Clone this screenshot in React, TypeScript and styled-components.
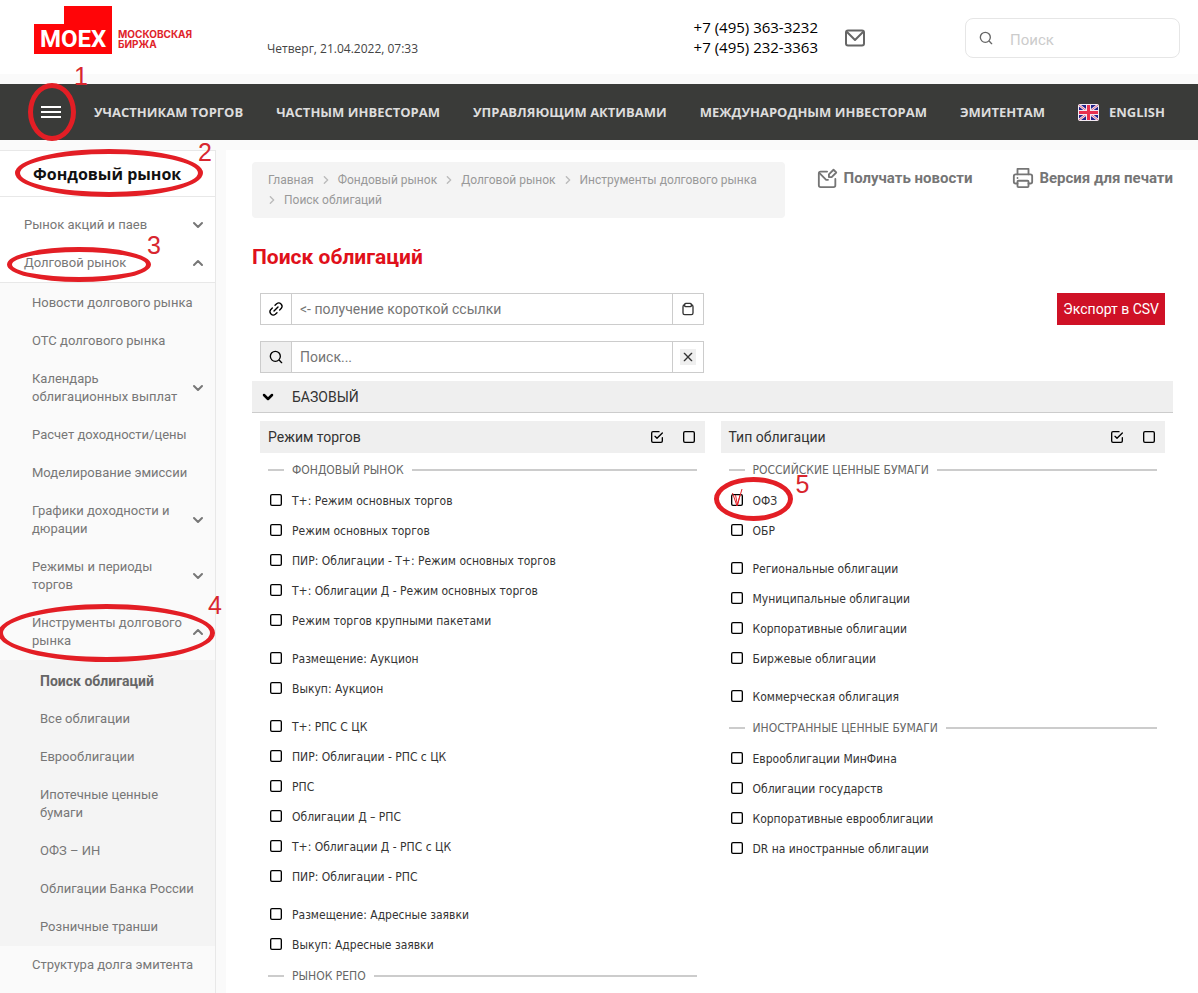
import React from 'react';
import styled, { createGlobalStyle, css } from 'styled-components';

const ui = '"Roboto", "Open Sans", sans-serif';
const wide = '"Open Sans", "Noto Sans", sans-serif';
const form = '"DejaVu Sans Condensed", "Noto Sans", sans-serif';
const markRed = '#e31e25';

const GlobalStyle = createGlobalStyle`
  *, *::before, *::after { box-sizing: border-box; }
  body { margin: 0; background: #fafafa; color: #333; font: 13px/18px ${ui}; }
  button, input { font: inherit; color: inherit; }
  button { border: 0; padding: 0; background: none; cursor: pointer; }
  a { color: inherit; text-decoration: none; }
  ul { list-style: none; margin: 0; padding: 0; }
  svg { display: block; flex: none; }
`;

/* ---------- icons ---------- */

const Line = styled.svg.attrs({ viewBox: '0 0 24 24', 'aria-hidden': true })<{ $size?: number; $weight?: number }>`
  width: ${p => p.$size ?? 16}px;
  height: ${p => p.$size ?? 16}px;
  fill: none;
  stroke: currentColor;
  stroke-width: ${p => p.$weight ?? 2};
  stroke-linecap: round;
  stroke-linejoin: round;
`;

const SearchIcon = ({ weight = 2 }: { weight?: number }) => (
  <Line $weight={weight}><circle cx="11" cy="11" r="7.500" /><path d="M20.500 20.500L17 17" /></Line>
);
const LinkIcon = () => (
  <Line>
    <path d="M9 15l6-6" />
    <path d="M10.500 6.500L13 4a5 5 0 0 1 7 7l-2.500 2.500" />
    <path d="M13.500 17.500L11 20a5 5 0 0 1-7-7l2.500-2.500" />
  </Line>
);
const ClipboardIcon = () => (
  <Line>
    <path d="M7 5.500a3 3 0 0 0-2.500 3V18a2.500 2.500 0 0 0 2.500 2.500h10a2.500 2.500 0 0 0 2.500-2.500V8.500a3 3 0 0 0-2.500-3" />
    <rect x="7" y="3.500" width="10" height="5" rx="1.500" />
  </Line>
);
const CloseIcon = () => <Line><path d="M6.500 6.500l11 11M17.500 6.500l-11 11" /></Line>;
const SquareIcon = () => <Line><rect x="4" y="4" width="16" height="16" rx="2" /></Line>;
const SquareCheckIcon = () => (
  <Line><path d="M9 11l3 3 8-8" /><path d="M20 13v5a2 2 0 0 1-2 2H6a2 2 0 0 1-2-2V6a2 2 0 0 1 2-2h9" /></Line>
);
const MailIcon = () => (
  <Line $size={24}><rect x="3" y="4.500" width="18" height="15" rx="2" /><path d="M4 6l8 8 8-8" /></Line>
);
const MailEditIcon = () => (
  <Line $size={22} $weight={2}>
    <path d="M11 5H4a2 2 0 0 0-2 2v13a2 2 0 0 0 2 2h14a2 2 0 0 0 2-2v-7" />
    <path d="M3 7l7 7h2" />
    <path d="M13 8l5-5 3 3-5 5h-3z" />
  </Line>
);
const PrinterIcon = () => (
  <Line $size={22}>
    <path d="M6 8V2h12v6" />
    <path d="M6 18H4a2 2 0 0 1-2-2v-6a2 2 0 0 1 2-2h16a2 2 0 0 1 2 2v6a2 2 0 0 1-2 2h-2" />
    <rect x="6" y="15" width="12" height="7" rx="1" />
    <path d="M6 12h0" />
  </Line>
);
const ChevronDown = ({ weight = 4 }: { weight?: number }) => <Line $size={12} $weight={weight}><path d="M4 8l8 8 8-8" /></Line>;
const ChevronUp = () => <Line $size={12} $weight={4}><path d="M4 16l8-8 8 8" /></Line>;

const FlagSvg = styled.svg`width: 21px; height: 17px;`;
const Flag = () => (
  <FlagSvg viewBox="0 0 21 17" aria-hidden="true">
    <rect width="21" height="17" rx="2" fill="#f2e9f2" />
    <rect x="1" y="1" width="19" height="15" fill="#22228a" />
    <path d="M1 1l19 15M20 1L1 16" stroke="#f2e9f2" strokeWidth="2.500" />
    <path d="M1 1l19 15M20 1L1 16" stroke="#e5476a" strokeWidth="0.800" />
    <path d="M10.500 1v15M1 8.500h19" stroke="#f2e9f2" strokeWidth="5" />
    <path d="M10.500 1v15M1 8.500h19" stroke="#e8304f" strokeWidth="3" />
  </FlagSvg>
);

/* ---------- hand-drawn step marks ---------- */

const MarkBox = styled.span<{ $x: number; $y: number }>`
  position: absolute;
  left: ${p => p.$x}px;
  top: ${p => p.$y}px;
  z-index: 2;
  pointer-events: none;
`;
const MarkRing = styled.span<{ $w: number; $h: number }>`
  display: block;
  width: ${p => p.$w}px;
  height: ${p => p.$h}px;
  border: 5px solid ${markRed};
  border-radius: 50%;
`;
const MarkNumber = styled.span<{ $x: number; $y: number }>`
  position: absolute;
  left: ${p => p.$x}px;
  top: ${p => p.$y}px;
  font: 25px/24px "Liberation Sans", Arial, sans-serif;
  color: #d8262e;
`;
type MarkProps = { x: number; y: number; w: number; h: number; n: string; nx: number; ny: number };
const Mark = ({ x, y, w, h, n, nx, ny }: MarkProps) => (
  <MarkBox $x={x} $y={y}>
    <MarkRing $w={w} $h={h} />
    <MarkNumber $x={nx} $y={ny}>{n}</MarkNumber>
  </MarkBox>
);

/* ---------- page frame ---------- */

const Page = styled.div`display: flex; flex-direction: column; min-height: 100vh;`;

const Header = styled.header`
  display: flex;
  align-items: flex-start;
  height: 74px;
  padding: 0 18px 0 34px;
  background: #fff;
`;
const Logo = styled.svg`width: 160px; height: 54px;`;
const DateText = styled.time`
  margin: 40px auto 0 73px;
  font: 12px/18px ${wide};
  color: #444;
`;
const Phones = styled.address`
  margin: 17px 25px 0 0;
  font: normal 15px/20px ${wide};
  color: #000;
`;
const Phone = styled.a`display: block; white-space: nowrap;`;
const MailLink = styled.a`margin: 26px 98px 0 0; color: #666;`;
const SiteSearch = styled.label`
  display: flex;
  align-items: center;
  gap: 16px;
  width: 215px;
  height: 40px;
  margin-top: 18px;
  padding: 0 12px;
  border: 1px solid #e6e6e6;
  border-radius: 8px;
  color: #666;
`;
const SiteSearchInput = styled.input`
  flex: 1;
  min-width: 0;
  border: 0;
  outline: 0;
  padding: 3px 0 0;
  background: none;
  font: 15px/20px ${ui};
  &::placeholder { color: #ccc; opacity: 1; }
`;

const Nav = styled.nav`
  position: relative;
  display: flex;
  align-items: center;
  justify-content: space-between;
  height: 56px;
  margin: 10px 0;
  padding: 0 33px 0 41px;
  background: #3a3b39;
  font: bold 13px/18px ${wide};
  color: #ddd;
  white-space: nowrap;
`;
const Burger = styled.button`
  display: flex;
  flex-direction: column;
  gap: 3px;
  width: 20px;
`;
const BurgerBar = styled.span`height: 2px; background: #fff;`;
const NavLink = styled.a`display: flex; align-items: center; gap: 10px;`;

const Body = styled.div`display: flex; flex: 1; gap: 10px;`;

/* ---------- side menu ---------- */

const Side = styled.aside`
  flex: none;
  width: 216px;
  border-top: 1px solid #e8e8e8;
  border-right: 1px solid #e8e8e8;
`;
const SideTitle = styled.h2`
  position: relative;
  margin: 0;
  padding: 12px 33px 11px;
  border-bottom: 1px solid #e8e8e8;
  background: #fff;
  font: bold 16px/22px ${wide};
  color: #111;
`;
const TopMenu = styled.ul`padding-top: 9px; background: #fff;`;
const SubMenu = styled.ul`padding-top: 1px; border-top: 1px solid #e8e8e8; background: #fafafa;`;
const LeafMenu = styled.ul`padding: 2px 0 0; background: #f4f4f4;`;
const MenuItem = styled.li`position: relative;`;
const MenuLink = styled.a<{ $level: number; $current?: boolean }>`
  display: flex;
  align-items: center;
  justify-content: space-between;
  gap: 4px;
  padding: 10px 11px 10px ${p => 16 + p.$level * 8}px;
  color: #777;
  ${p => p.$current && css`font-size: 14px; font-weight: bold; color: #666;`}
`;

type Entry = { text: string; open?: boolean; mark?: MarkProps; current?: boolean; children?: Entry[]; fold?: boolean };
const menu: Entry[] = [
  { text: 'Рынок акций и паев', fold: true },
  {
    text: 'Долговой рынок', open: true,
    mark: { x: 7, y: 3, w: 144, h: 35, n: '3', nx: 140, ny: -14 },
    children: [
      { text: 'Новости долгового рынка' },
      { text: 'ОТС долгового рынка' },
      { text: 'Календарь облигационных выплат', fold: true },
      { text: 'Расчет доходности/цены' },
      { text: 'Моделирование эмиссии' },
      { text: 'Графики доходности и дюрации', fold: true },
      { text: 'Режимы и периоды торгов', fold: true },
      {
        text: 'Инструменты долгового рынка', open: true,
        mark: { x: -2, y: 0, w: 217, h: 58, n: '4', nx: 210, ny: -11 },
        children: [
          { text: 'Поиск облигаций', current: true },
          { text: 'Все облигации' },
          { text: 'Еврооблигации' },
          { text: 'Ипотечные ценные бумаги' },
          { text: 'ОФЗ – ИН' },
          { text: 'Облигации Банка России' },
          { text: 'Розничные транши' },
        ],
      },
      { text: 'Структура долга эмитента' },
    ],
  },
];
const MenuEntry = ({ entry, level }: { entry: Entry; level: number }) => {
  const List = level === 1 ? SubMenu : LeafMenu;
  return (
    <MenuItem>
      <MenuLink href="#" $level={level} $current={entry.current}>
        {entry.text}
        {entry.fold && <ChevronDown />}
        {entry.open && <ChevronUp />}
      </MenuLink>
      {entry.mark && <Mark {...entry.mark} />}
      {entry.children && (
        <List>{entry.children.map(c => <MenuEntry key={c.text} entry={c} level={level + 1} />)}</List>
      )}
    </MenuItem>
  );
};

/* ---------- main column ---------- */

const Main = styled.main`flex: 1; min-width: 0; padding: 12px 25px 0 26px; background: #fff;`;
const TopRow = styled.div`display: flex; align-items: flex-start; justify-content: space-between; gap: 30px;`;
const Crumbs = styled.nav`
  flex: 0 1 533px;
  padding: 8px 16px;
  border-radius: 4px;
  background: #f4f4f4;
  font-size: 12px;
  line-height: 20px;
  color: #999;
`;
const CrumbList = styled.ol`display: flex; flex-wrap: wrap; margin: 0; padding: 0; list-style: none;`;
const Crumb = styled.li`
  display: flex;
  align-items: center;
  margin-right: 8px;
  & > svg { margin-right: 8px; color: #bbb; }
`;
const Tools = styled.div`display: flex; flex: none; gap: 40px; padding-top: 5px;`;
const Tool = styled.a`
  display: flex;
  align-items: center;
  gap: 5px;
  font: bold 15px/22px ${ui};
  color: #757575;
`;
const Title = styled.h1`margin: 27px 0 24px; font: bold 21px/24px ${ui}; color: #e0101a;`;

const Controls = styled.div`display: flex; justify-content: space-between; align-items: flex-start; padding: 0 8px;`;
const Fields = styled.div`display: flex; flex-direction: column; gap: 16px; width: 444px; margin-bottom: 8px;`;
const Field = styled.div`
  display: flex;
  height: 32px;
  border: 1px solid #ccc;
  background: #fff;
`;
const FieldButton = styled.button<{ $side: 'left' | 'right'; $shaded?: boolean }>`
  display: flex;
  align-items: center;
  justify-content: center;
  width: 31px;
  border-${p => (p.$side === 'left' ? 'right' : 'left')}: 1px solid #ccc;
  background: ${p => (p.$shaded ? '#efefef' : 'none')};
  color: ${p => (p.$side === 'left' ? '#000' : '#333')};
`;
const FieldInput = styled.input`
  flex: 1;
  min-width: 0;
  border: 0;
  outline: 0;
  padding: 0 8px;
  font: 14px/20px ${ui};
  &::placeholder { color: #757575; opacity: 1; }
`;
const ClearChip = styled.span`
  display: flex;
  width: 16px;
  height: 16px;
  background: #efefef;
`;
const ExportButton = styled.button`
  height: 32px;
  padding: 0 6px;
  background: #cf1126;
  font: 14px/20px ${ui};
  color: #fff;
`;
const SectionBar = styled.button`
  display: flex;
  align-items: center;
  gap: 18px;
  width: 100%;
  height: 32px;
  padding: 0 10px;
  border-bottom: 1px solid #ccc;
  background: #efefef;
  font: 14px/20px ${ui};
  color: #333;
  & > svg { color: #000; }
`;
const Columns = styled.div`display: grid; grid-template-columns: 1fr 1fr; gap: 16px; padding: 8px 8px 0;`;
const Column = styled.section`min-width: 0;`;
const ColumnHead = styled.header`
  display: flex;
  align-items: center;
  gap: 16px;
  height: 32px;
  padding: 0 8px;
  background: #efefef;
`;
const ColumnTitle = styled.h3`flex: 1; margin: 0; font: 14px/20px ${ui}; color: #333;`;
const IconButton = styled.button`color: #000;`;
const Group = styled.fieldset`min-width: 0; margin: 0; padding: 0; border: 0;`;
const Legend = styled.legend`
  display: flex;
  align-items: center;
  gap: 8px;
  width: 100%;
  height: 32px;
  padding: 2px 8px 0;
  font: 12px/16px ${form};
  color: #666;
  &::before { content: ''; width: 16px; height: 2px; background: #ccc; }
  &::after { content: ''; flex: 1; height: 2px; background: #ccc; }
`;
const Batch = styled.div`& + & { margin-top: 8px; }`;
const Option = styled.label`
  position: relative;
  display: flex;
  align-items: center;
  gap: 8px;
  height: 30px;
  padding: 0 8px;
  font: 12px/16px ${form};
  color: #333;
`;
const OptionText = styled.span`padding-top: 2px;`;
const CheckBox = styled.span`display: grid; width: 16px; height: 16px; color: #000; & > * { grid-area: 1 / 1; }`;
const CheckInput = styled.input`appearance: none; width: 16px; height: 16px; margin: 0;`;
const PenTick = styled.svg`
  position: absolute;
  left: 8px;
  top: 1px;
  width: 16px;
  height: 22px;
  fill: none;
  stroke: ${markRed};
`;

type Section = { title: string; batches: string[][] };
const tradeModes: Section[] = [
  {
    title: 'ФОНДОВЫЙ РЫНОК',
    batches: [
      ['Т+: Режим основных торгов', 'Режим основных торгов', 'ПИР: Облигации - Т+: Режим основных торгов', 'Т+: Облигации Д - Режим основных торгов', 'Режим торгов крупными пакетами'],
      ['Размещение: Аукцион', 'Выкуп: Аукцион'],
      ['Т+: РПС С ЦК', 'ПИР: Облигации - РПС с ЦК', 'РПС', 'Облигации Д – РПС', 'Т+: Облигации Д - РПС с ЦК', 'ПИР: Облигации - РПС'],
      ['Размещение: Адресные заявки', 'Выкуп: Адресные заявки'],
    ],
  },
  { title: 'РЫНОК РЕПО', batches: [] },
];
const bondTypes: Section[] = [
  {
    title: 'РОССИЙСКИЕ ЦЕННЫЕ БУМАГИ',
    batches: [
      ['ОФЗ', 'ОБР'],
      ['Региональные облигации', 'Муниципальные облигации', 'Корпоративные облигации', 'Биржевые облигации'],
      ['Коммерческая облигация'],
    ],
  },
  {
    title: 'ИНОСТРАННЫЕ ЦЕННЫЕ БУМАГИ',
    batches: [['Еврооблигации МинФина', 'Облигации государств', 'Корпоративные еврооблигации', 'DR на иностранные облигации']],
  },
];

const FilterColumn = ({ title, sections }: { title: string; sections: Section[] }) => (
  <Column>
    <ColumnHead>
      <ColumnTitle>{title}</ColumnTitle>
      <IconButton type="button" aria-label="Выбрать все"><SquareCheckIcon /></IconButton>
      <IconButton type="button" aria-label="Снять все"><SquareIcon /></IconButton>
    </ColumnHead>
    {sections.map(s => (
      <Group key={s.title}>
        <Legend>{s.title}</Legend>
        {s.batches.map((batch, i) => (
          <Batch key={i}>
            {batch.map(text => (
              <Option key={text}>
                <CheckBox><CheckInput type="checkbox" /><SquareIcon /></CheckBox>
                <OptionText>{text}</OptionText>
                {text === 'ОФЗ' && (
                  <>
                    <PenTick viewBox="0 0 16 22" aria-hidden="true"><path d="M3.500 7l4.500 13 5-17M6.500 9l2 10 2.500-10" /></PenTick>
                    <Mark x={-7} y={-8} w={79} h={44} n="5" nx={82} ny={-5} />
                  </>
                )}
              </Option>
            ))}
          </Batch>
        ))}
      </Group>
    ))}
  </Column>
);

export default function App() {
  return (
    <Page>
      <GlobalStyle />
      <Header>
        <a href="#" aria-label="Московская биржа">
          <Logo viewBox="0 0 160 54">
            <path d="M30 6h48v48H0V24h30z" fill="#ff0508" />
            <text x="6" y="47" fontFamily="Roboto, sans-serif" fontWeight="bold" fontSize="24" fill="#fff">MOEX</text>
            <text x="84" y="38" fontFamily="Inter, sans-serif" fontWeight="bold" fontSize="10" fill="#e0242b">МОСКОВСКАЯ</text>
            <text x="84" y="48" fontFamily="Inter, sans-serif" fontWeight="bold" fontSize="10" fill="#e0242b">БИРЖА</text>
          </Logo>
        </a>
        <DateText dateTime="2022-04-21T07:33">Четверг, 21.04.2022, 07:33</DateText>
        <Phones>
          <Phone href="tel:+74953633232">+7 (495) 363-3232</Phone>
          <Phone href="tel:+74952323363">+7 (495) 232-3363</Phone>
        </Phones>
        <MailLink href="#" aria-label="Написать нам"><MailIcon /></MailLink>
        <SiteSearch>
          <SearchIcon />
          <SiteSearchInput type="search" placeholder="Поиск" aria-label="Поиск по сайту" />
        </SiteSearch>
      </Header>

      <Nav>
        <Burger type="button" aria-label="Меню"><BurgerBar /><BurgerBar /><BurgerBar /></Burger>
        <NavLink href="#">УЧАСТНИКАМ ТОРГОВ</NavLink>
        <NavLink href="#">ЧАСТНЫМ ИНВЕСТОРАМ</NavLink>
        <NavLink href="#">УПРАВЛЯЮЩИМ АКТИВАМИ</NavLink>
        <NavLink href="#">МЕЖДУНАРОДНЫМ ИНВЕСТОРАМ</NavLink>
        <NavLink href="#">ЭМИТЕНТАМ</NavLink>
        <NavLink href="#"><Flag />ENGLISH</NavLink>
        <Mark x={28} y={-1} w={48} h={58} n="1" nx={46} ny={-19} />
      </Nav>

      <Body>
        <Side>
          <SideTitle>
            Фондовый рынок
            <Mark x={15} y={-2} w={188} h={48} n="2" nx={183} ny={-9} />
          </SideTitle>
          <TopMenu>{menu.map(e => <MenuEntry key={e.text} entry={e} level={1} />)}</TopMenu>
        </Side>

        <Main>
          <TopRow>
            <Crumbs aria-label="Навигация">
              <CrumbList>
                {['Главная', 'Фондовый рынок', 'Долговой рынок', 'Инструменты долгового рынка', 'Поиск облигаций'].map((c, i) => (
                  <Crumb key={c}>
                    {i > 0 && <Line $size={8} $weight={4}><path d="M7 2l10 10L7 22" /></Line>}
                    <a href="#">{c}</a>
                  </Crumb>
                ))}
              </CrumbList>
            </Crumbs>
            <Tools>
              <Tool href="#"><MailEditIcon />Получать новости</Tool>
              <Tool href="#"><PrinterIcon />Версия для печати</Tool>
            </Tools>
          </TopRow>

          <Title>Поиск облигаций</Title>

          <Controls>
            <Fields>
              <Field>
                <FieldButton type="button" $side="left" aria-label="Получить ссылку"><LinkIcon /></FieldButton>
                <FieldInput type="text" placeholder="<- получение короткой ссылки" aria-label="Короткая ссылка" />
                <FieldButton type="button" $side="right" aria-label="Скопировать"><ClipboardIcon /></FieldButton>
              </Field>
              <Field>
                <FieldButton type="button" $side="left" $shaded aria-label="Найти"><SearchIcon /></FieldButton>
                <FieldInput type="text" placeholder="Поиск..." aria-label="Поиск облигаций" />
                <FieldButton type="button" $side="right" aria-label="Очистить"><ClearChip><CloseIcon /></ClearChip></FieldButton>
              </Field>
            </Fields>
            <ExportButton type="button">Экспорт в CSV</ExportButton>
          </Controls>

          <SectionBar type="button"><ChevronDown weight={5} />БАЗОВЫЙ</SectionBar>
          <Columns>
            <FilterColumn title="Режим торгов" sections={tradeModes} />
            <FilterColumn title="Тип облигации" sections={bondTypes} />
          </Columns>
        </Main>
      </Body>
    </Page>
  );
}
